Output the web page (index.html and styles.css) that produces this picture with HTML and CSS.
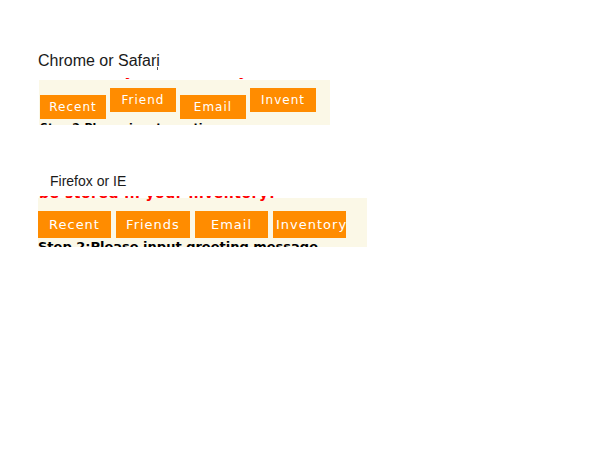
FILE: index.html
```html
<!DOCTYPE html>
<html>
<head>
<meta charset="utf-8">
<link rel="stylesheet" href="styles.css">
</head>
<body>
  <div class="label label-chrome">Chrome or Safari<span class="caret"></span></div>
  <div class="viewport viewport-chrome">
    <div class="notice notice-chrome">stored in your inventory!</div>
    <div class="panel panel-chrome">
      <div class="tabs tabs-chrome">
        <div class="tab tab-low">Recent</div>
        <div class="tab">Friend</div>
        <div class="tab tab-low">Email</div>
        <div class="tab">Invent</div>
      </div>
      <div class="step">Step 2:Please input greeting<br>message</div>
    </div>
  </div>

  <div class="label label-firefox">Firefox or IE</div>
  <div class="viewport viewport-firefox">
    <div class="notice notice-firefox">be stored in your inventory!</div>
    <div class="panel panel-firefox">
      <div class="tabs tabs-firefox">
        <div class="tab">Recent</div>
        <div class="tab">Friends</div>
        <div class="tab">Email</div>
        <div class="tab">Inventory</div>
      </div>
      <div class="step">Step 2:Please input greeting message</div>
    </div>
  </div>
</body>
</html>
```
FILE: styles.css
```css
html, body {
  margin: 0;
  padding: 0;
  background: #ffffff;
}

body {
  font-family: "Liberation Sans", Arial, sans-serif;
  color: #000;
}

.label {
  color: #1a1a1a;
}

.label-chrome {
  font-size: 16px;
  line-height: 18px;
  margin: 52px 0 0 38px;
}

.caret {
  display: inline-block;
  width: 1px;
  height: 3px;
  background: #555;
  vertical-align: -4px;
  margin-left: -3px;
}

.label-firefox {
  font-size: 14px;
  line-height: 16px;
  margin: 48px 0 0 50px;
}

.viewport {
  overflow: hidden;
  background: #fff;
}

.viewport-chrome {
  margin: 8px 0 0 39px;
  width: 291px;
  height: 47px;
}

.viewport-firefox {
  margin: 7px 0 0 38px;
  width: 329px;
  height: 51px;
}

.notice {
  font-family: "DejaVu Sans", Verdana, sans-serif;
  font-weight: bold;
  font-size: 14px;
  line-height: 14px;
  letter-spacing: 0.5px;
  color: #ff0000;
  white-space: nowrap;
}

.notice-chrome {
  margin-top: -14px;
  height: 16px;
  padding-left: 5px;
}

.notice-firefox {
  margin-top: -10px;
  height: 12px;
  padding-left: 1px;
}

.panel {
  background: #fbf8e7;
  height: 200px;
}

.panel-chrome {
  padding: 8px 0 0 1px;
}

.panel-firefox {
  padding: 13px 0 0 0;
}

.tabs {
  display: flex;
  align-items: flex-start;
}

.tabs-chrome {
  gap: 4px;
}

.tabs-firefox {
  gap: 5px;
}

.tab {
  background: #ff8c00;
  color: #ffffff;
  font-family: "DejaVu Sans", Verdana, sans-serif;
  text-align: center;
  white-space: nowrap;
  overflow: hidden;
  box-sizing: border-box;
  padding: 0 3px;
}

.tabs-chrome .tab {
  width: 66px;
  height: 24px;
  font-size: 12px;
  line-height: 24px;
  letter-spacing: 1px;
}

.tabs-chrome .tab-low {
  margin-top: 7px;
}

.tabs-firefox .tab {
  width: 73px;
  height: 27px;
  font-size: 13px;
  line-height: 28px;
  letter-spacing: 1px;
}

.tabs-firefox .tab:nth-child(2) {
  width: 74px;
}

.tabs-firefox .tab:last-child {
  text-align: left;
}

.step {
  font-family: "DejaVu Sans", Verdana, sans-serif;
  font-weight: bold;
  white-space: nowrap;
}

.panel-chrome .step {
  font-size: 11px;
  line-height: 14px;
  padding-top: 2px;
}

.panel-firefox .step {
  font-size: 13px;
  line-height: 16px;
  padding-top: 1px;
}
```
